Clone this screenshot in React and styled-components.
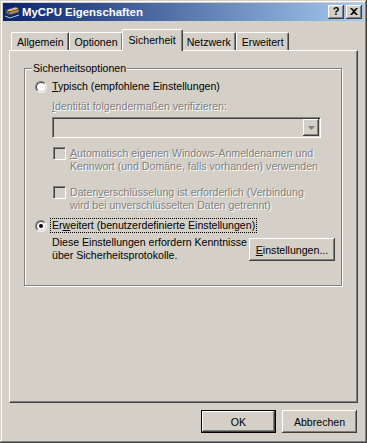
import React from 'react'
import styled, { createGlobalStyle } from 'styled-components'

const GlobalStyle = createGlobalStyle`
  html, body {
    margin: 0;
    padding: 0;
    background: #d4d0c8;
  }

  body {
    font-family: 'Liberation Sans', Arial, sans-serif;
    font-size: 10.6px;
    color: #000;
  }

  * {
    box-sizing: border-box;
  }
`

const raised = 'inset -1px -1px #404040, inset 1px 1px #fff, inset -2px -2px #808080'

export default function App () {
  return (
    <>
      <GlobalStyle />
      <Window>
        <Caption>
          <AppIcon />
          <Title>MyCPU Eigenschaften</Title>
          <CaptionButton>?</CaptionButton>
          <CaptionButton>
            <svg width='8' height='7' viewBox='0 0 8 7'>
              <path d='M0 0h2l2 2 2-2h2L5 3.5 8 7H6L4 5 2 7H0l3-3.5z' fill='#000' />
            </svg>
          </CaptionButton>
        </Caption>

        <Body>
          <TabRow>
            <Tab>Allgemein</Tab>
            <Tab>Optionen</Tab>
            <Tab $active>Sicherheit</Tab>
            <Tab>Netzwerk</Tab>
            <Tab>Erweitert</Tab>
          </TabRow>

          <Panel>
            <Group>
              <Legend>Sicherheitsoptionen</Legend>

              <OptionRow>
                <Radio />
                <Label><u>T</u>ypisch (empfohlene Einstellungen)</Label>
              </OptionRow>

              <Indent>
                <DisabledText $top={7}><u>I</u>dentität folgendermaßen verifizieren:</DisabledText>

                <Combo>
                  <ComboButton>
                    <svg width='7' height='4' viewBox='0 0 7 4'>
                      <path d='M0 0h7L3.5 4z' fill='#808080' />
                    </svg>
                  </ComboButton>
                </Combo>

                <CheckRow $top={9}>
                  <CheckBox />
                  <DisabledText>
                    <u>A</u>utomatisch eigenen Windows-Anmeldenamen und<br />
                    Kennwort (und Domäne, falls vorhanden) verwenden
                  </DisabledText>
                </CheckRow>

                <CheckRow $top={13}>
                  <CheckBox />
                  <DisabledText>
                    Daten<u>v</u>erschlüsselung ist erforderlich (Verbindung<br />
                    wird bei unverschlüsselten Daten getrennt)
                  </DisabledText>
                </CheckRow>
              </Indent>

              <OptionRow $top={7}>
                <Radio $checked />
                <Label $focused>Er<u>w</u>eitert (benutzerdefinierte Einstellungen)</Label>
              </OptionRow>

              <InfoRow>
                <Label>
                  Diese Einstellungen erfordern Kenntnisse<br />
                  über Sicherheitsprotokolle.
                </Label>
                <Button $width={86} $inline><u>E</u>instellungen...</Button>
              </InfoRow>
            </Group>
          </Panel>

          <ButtonRow>
            <Button $width={75} $default>OK</Button>
            <Button $width={75}>Abbrechen</Button>
          </ButtonRow>
        </Body>
      </Window>
    </>
  )
}

function AppIcon () {
  return (
    <IconBox width='16' height='16' viewBox='0 0 16 16'>
      <path d='M2 6l10-3 3 2-10 3z' fill='#e8e8e8' stroke='#404040' strokeWidth='0.8' />
      <path d='M5 8l10-3v3L5 11z' fill='#8c96b4' stroke='#404040' strokeWidth='0.8' />
      <path d='M2 6l3 2v3l-3-2z' fill='#6a7394' stroke='#404040' strokeWidth='0.8' />
      <path d='M4 6.4l8-2.4 1.4 0.9-8 2.4z' fill='#f5b400' />
      <path d='M6 9.3l8-2.4v1l-8 2.4z' fill='#e87a00' />
      <path d='M1 12l5 2 9-3' stroke='#c0c8e0' strokeWidth='1' fill='none' />
    </IconBox>
  )
}

function Radio ({ $checked }) {
  return (
    <RadioOuter>
      <RadioInner $checked={$checked} />
    </RadioOuter>
  )
}

const Window = styled.div`
  width: 367px;
  height: 443px;
  padding: 3px;
  display: flex;
  flex-direction: column;
  background: #d4d0c8;
  box-shadow: inset -1px -1px #404040, inset 1px 1px #d4d0c8, inset -2px -2px #808080, inset 2px 2px #fff;
`

const Caption = styled.div`
  height: 18px;
  flex: none;
  display: flex;
  align-items: center;
  padding: 0 2px 0 1px;
  background: linear-gradient(to right, #0a246a, #a6caf0);
  color: #fff;
`

const IconBox = styled.svg`
  flex: none;
  margin-right: 2px;
`

const Title = styled.span`
  flex: 1;
  font-weight: bold;
  font-size: 11.4px;
  white-space: nowrap;
`

const CaptionButton = styled.span`
  width: 16px;
  height: 14px;
  margin-left: 2px;
  display: flex;
  align-items: center;
  justify-content: center;
  background: #d4d0c8;
  box-shadow: ${raised};
  color: #000;
  font-weight: bold;
  font-size: 11px;
  line-height: 1;
  padding-bottom: 1px;
`

const Body = styled.div`
  flex: 1;
  display: flex;
  flex-direction: column;
  margin-top: 1px;
  padding: 7px 6px 0 6px;
`

const TabRow = styled.div`
  height: 21px;
  display: flex;
  align-items: flex-end;
  padding-left: 2px;
`

const Tab = styled.div`
  position: relative;
  z-index: ${p => p.$active ? 1 : 0};
  height: ${p => p.$active ? 22 : 18}px;
  margin: ${p => p.$active ? '0 -2px -1px -1px' : '0'};
  padding: ${p => p.$active ? '0 6px 2px 6px' : '0 4px 0 5px'};
  display: flex;
  align-items: center;
  background: #d4d0c8;
  border-top: 1px solid #fff;
  border-left: 1px solid #fff;
  border-right: 1px solid #404040;
  border-radius: 2px 2px 0 0;
  box-shadow: inset -1px 0 #808080;
  white-space: nowrap;
`

const Panel = styled.div`
  height: 353px;
  flex: none;
  padding: 11px 15px 0 14px;
  background: #d4d0c8;
  border-top: 1px solid #fff;
  border-left: 1px solid #fff;
  border-right: 1px solid #404040;
  border-bottom: 1px solid #404040;
  box-shadow: inset -1px -1px #808080;
`

const Group = styled.fieldset`
  margin: 0;
  min-width: 0;
  padding: 5px 6px 23px 10px;
  border: 1px solid #808080;
  box-shadow: 1px 1px 0 #fff, inset 1px 1px 0 #fff;
`

const Legend = styled.legend`
  margin-left: -3px;
  padding: 0 1px;
  line-height: 13px;
  background: #d4d0c8;
`

const OptionRow = styled.div`
  height: 13px;
  margin-top: ${p => p.$top || 0}px;
  display: flex;
  align-items: center;
  gap: 5px;
`

const RadioOuter = styled.span`
  width: 12px;
  height: 12px;
  flex: none;
  display: flex;
  border-radius: 50%;
  border: 1px solid;
  border-color: #808080 #fff #fff #808080;
`

const RadioInner = styled.span`
  flex: 1;
  display: flex;
  align-items: center;
  justify-content: center;
  border-radius: 50%;
  border: 1px solid;
  border-color: #404040 #d4d0c8 #d4d0c8 #404040;
  background: #fff;

  &::after {
    content: '';
    width: 4px;
    height: 4px;
    border-radius: 50%;
    background: ${p => p.$checked ? '#000' : 'transparent'};
  }
`

const Label = styled.span`
  line-height: 13px;
  white-space: nowrap;
  outline: ${p => p.$focused ? '1px dotted #000' : 'none'};
  padding: ${p => p.$focused ? '0 1px' : '0'};
  margin-left: ${p => p.$focused ? '-1px' : '0'};
`

const Indent = styled.div`
  margin-left: 17px;
`

const DisabledText = styled.div`
  margin-top: ${p => p.$top || 0}px;
  line-height: 13px;
  white-space: nowrap;
  color: #808080;
  text-shadow: 1px 1px 0 #fff;
`

const Combo = styled.div`
  width: 269px;
  height: 21px;
  margin-top: 4px;
  padding: 2px;
  display: flex;
  justify-content: flex-end;
  background: #d4d0c8;
  border: 1px solid;
  border-color: #808080 #fff #fff #808080;
  box-shadow: inset 1px 1px #404040, inset -1px -1px #d4d0c8;
`

const ComboButton = styled.span`
  width: 16px;
  margin: -1px -1px -1px 0;
  display: flex;
  align-items: center;
  justify-content: center;
  background: #d4d0c8;
  box-shadow: ${raised};
`

const CheckRow = styled.div`
  margin-top: ${p => p.$top}px;
  display: flex;
  align-items: flex-start;
  gap: 4px;
`

const CheckBox = styled.span`
  width: 13px;
  height: 13px;
  flex: none;
  margin-left: 1px;
  border: 1px solid;
  border-color: #808080 #fff #fff #808080;
  box-shadow: inset 1px 1px #404040, inset -1px -1px #d4d0c8;
  background: #d4d0c8;
`

const InfoRow = styled.div`
  margin: 4px 0 0 17px;
  display: flex;
  align-items: flex-start;
  justify-content: space-between;
`

const Button = styled.button`
  width: ${p => p.$width}px;
  height: 23px;
  flex: none;
  margin-top: ${p => p.$inline ? 2 : 0}px;
  padding: 0;
  border: 0;
  font: inherit;
  color: #000;
  background: #d4d0c8;
  box-shadow: ${p => p.$default
    ? 'inset 0 0 0 1px #000, inset -2px -2px #404040, inset 2px 2px #fff, inset -3px -3px #808080'
    : raised};
`

const ButtonRow = styled.div`
  margin-top: 7px;
  padding-right: 1px;
  display: flex;
  justify-content: flex-end;
  gap: 6px;
`
